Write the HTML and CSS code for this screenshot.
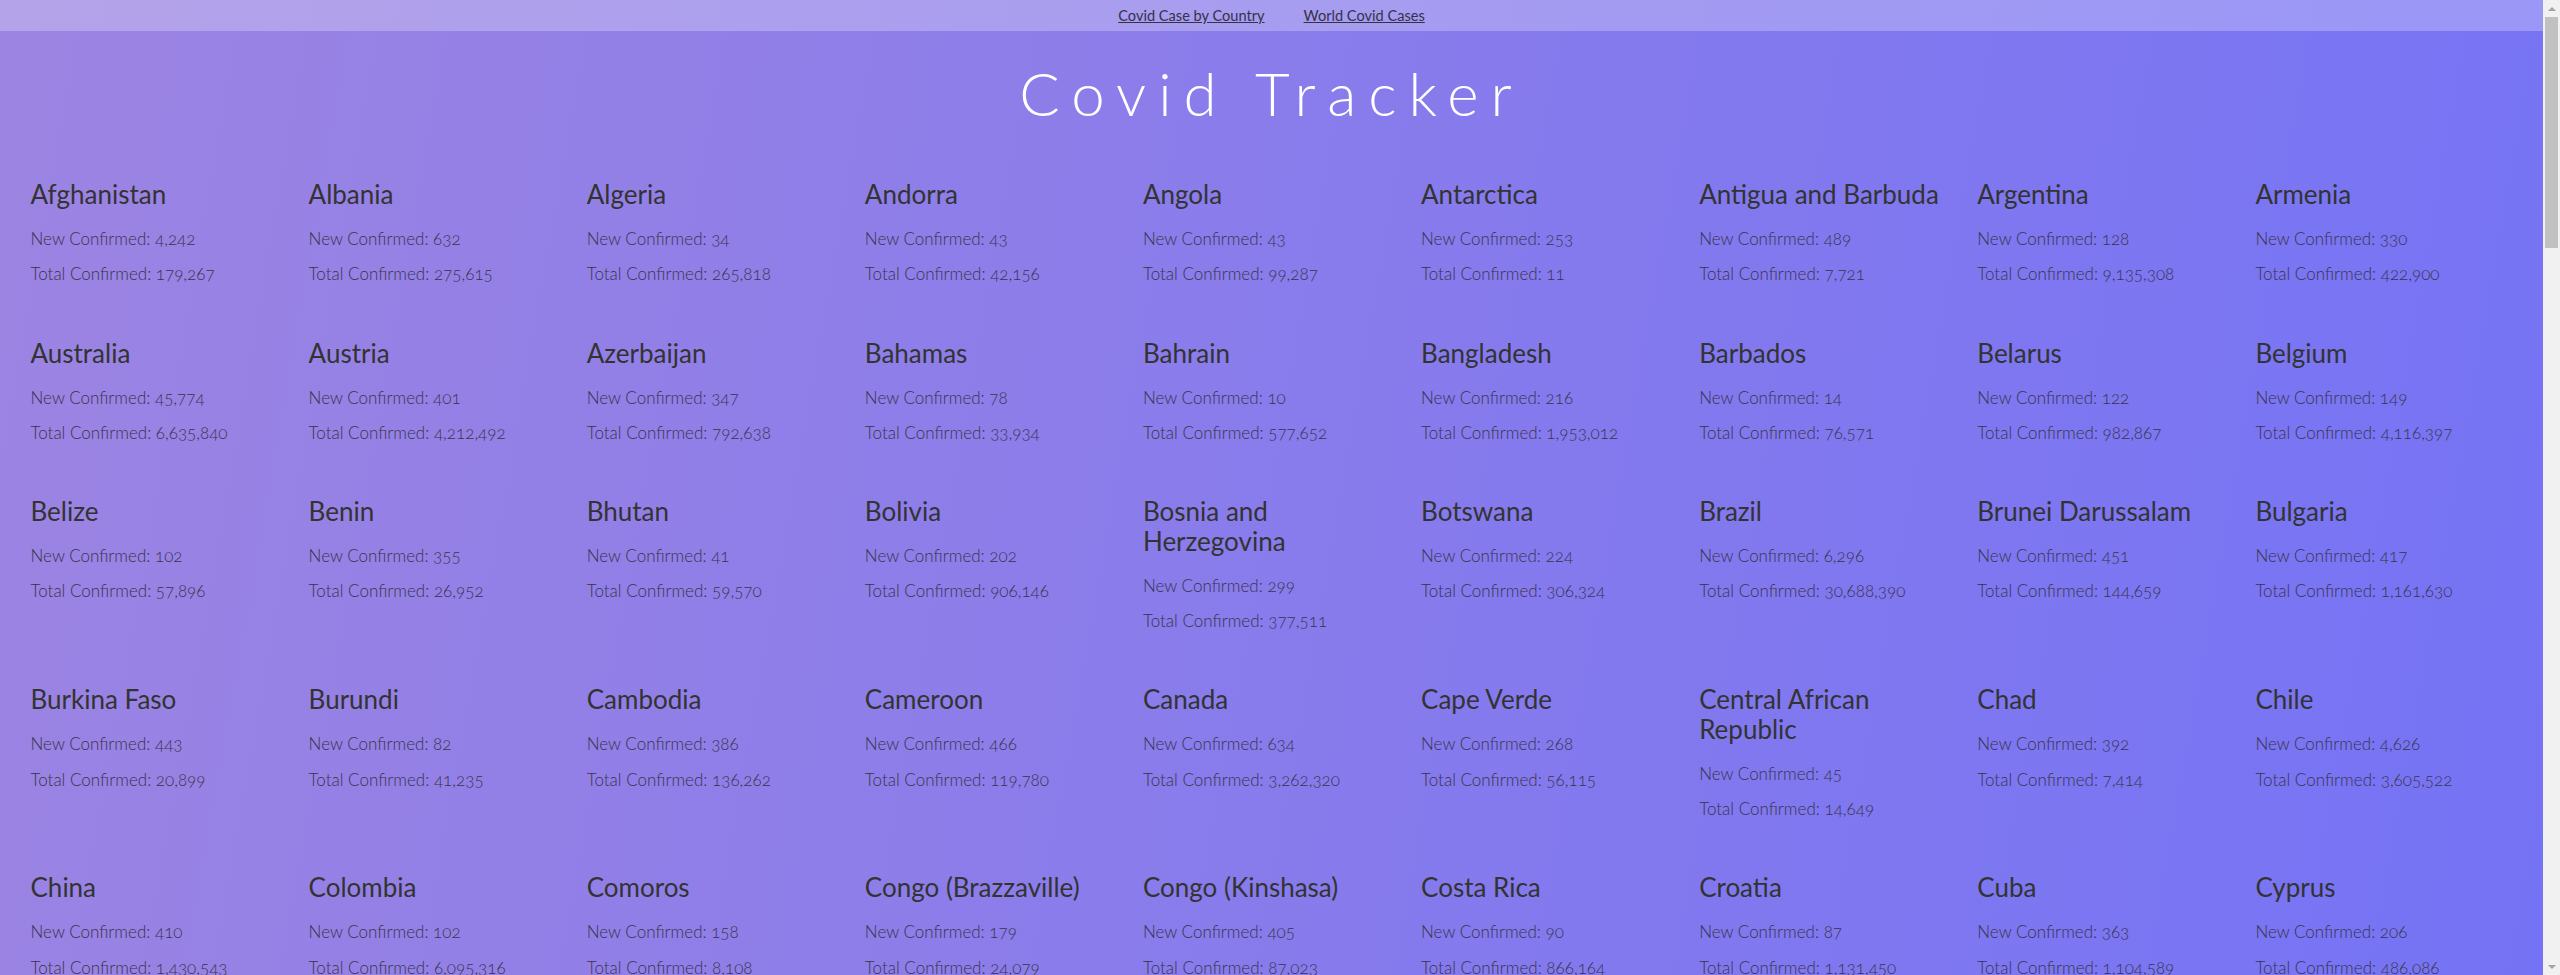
FILE: index.html
```html
<!DOCTYPE html>
<html lang="en">
<head>
<meta charset="utf-8">
<title>Covid Tracker</title>
<link rel="stylesheet" href="styles.css">
</head>
<body>
<div class="page">
<nav class="topnav">
  <a href="#">Covid Case by Country</a>
  <a href="#">World Covid Cases</a>
</nav>
<h1 class="title">Covid Tracker</h1>
<main class="grid">
  <div class="card"><h2>Afghanistan</h2><p>New Confirmed: 4,242</p><p>Total Confirmed: 179,267</p></div>
  <div class="card"><h2>Albania</h2><p>New Confirmed: 632</p><p>Total Confirmed: 275,615</p></div>
  <div class="card"><h2>Algeria</h2><p>New Confirmed: 34</p><p>Total Confirmed: 265,818</p></div>
  <div class="card"><h2>Andorra</h2><p>New Confirmed: 43</p><p>Total Confirmed: 42,156</p></div>
  <div class="card"><h2>Angola</h2><p>New Confirmed: 43</p><p>Total Confirmed: 99,287</p></div>
  <div class="card"><h2>Antarctica</h2><p>New Confirmed: 253</p><p>Total Confirmed: 11</p></div>
  <div class="card"><h2>Antigua and Barbuda</h2><p>New Confirmed: 489</p><p>Total Confirmed: 7,721</p></div>
  <div class="card"><h2>Argentina</h2><p>New Confirmed: 128</p><p>Total Confirmed: 9,135,308</p></div>
  <div class="card"><h2>Armenia</h2><p>New Confirmed: 330</p><p>Total Confirmed: 422,900</p></div>

  <div class="card"><h2>Australia</h2><p>New Confirmed: 45,774</p><p>Total Confirmed: 6,635,840</p></div>
  <div class="card"><h2>Austria</h2><p>New Confirmed: 401</p><p>Total Confirmed: 4,212,492</p></div>
  <div class="card"><h2>Azerbaijan</h2><p>New Confirmed: 347</p><p>Total Confirmed: 792,638</p></div>
  <div class="card"><h2>Bahamas</h2><p>New Confirmed: 78</p><p>Total Confirmed: 33,934</p></div>
  <div class="card"><h2>Bahrain</h2><p>New Confirmed: 10</p><p>Total Confirmed: 577,652</p></div>
  <div class="card"><h2>Bangladesh</h2><p>New Confirmed: 216</p><p>Total Confirmed: 1,953,012</p></div>
  <div class="card"><h2>Barbados</h2><p>New Confirmed: 14</p><p>Total Confirmed: 76,571</p></div>
  <div class="card"><h2>Belarus</h2><p>New Confirmed: 122</p><p>Total Confirmed: 982,867</p></div>
  <div class="card"><h2>Belgium</h2><p>New Confirmed: 149</p><p>Total Confirmed: 4,116,397</p></div>

  <div class="card"><h2>Belize</h2><p>New Confirmed: 102</p><p>Total Confirmed: 57,896</p></div>
  <div class="card"><h2>Benin</h2><p>New Confirmed: 355</p><p>Total Confirmed: 26,952</p></div>
  <div class="card"><h2>Bhutan</h2><p>New Confirmed: 41</p><p>Total Confirmed: 59,570</p></div>
  <div class="card"><h2>Bolivia</h2><p>New Confirmed: 202</p><p>Total Confirmed: 906,146</p></div>
  <div class="card"><h2>Bosnia and Herzegovina</h2><p>New Confirmed: 299</p><p>Total Confirmed: 377,511</p></div>
  <div class="card"><h2>Botswana</h2><p>New Confirmed: 224</p><p>Total Confirmed: 306,324</p></div>
  <div class="card"><h2>Brazil</h2><p>New Confirmed: 6,296</p><p>Total Confirmed: 30,688,390</p></div>
  <div class="card"><h2>Brunei Darussalam</h2><p>New Confirmed: 451</p><p>Total Confirmed: 144,659</p></div>
  <div class="card"><h2>Bulgaria</h2><p>New Confirmed: 417</p><p>Total Confirmed: 1,161,630</p></div>

  <div class="card"><h2>Burkina Faso</h2><p>New Confirmed: 443</p><p>Total Confirmed: 20,899</p></div>
  <div class="card"><h2>Burundi</h2><p>New Confirmed: 82</p><p>Total Confirmed: 41,235</p></div>
  <div class="card"><h2>Cambodia</h2><p>New Confirmed: 386</p><p>Total Confirmed: 136,262</p></div>
  <div class="card"><h2>Cameroon</h2><p>New Confirmed: 466</p><p>Total Confirmed: 119,780</p></div>
  <div class="card"><h2>Canada</h2><p>New Confirmed: 634</p><p>Total Confirmed: 3,262,320</p></div>
  <div class="card"><h2>Cape Verde</h2><p>New Confirmed: 268</p><p>Total Confirmed: 56,115</p></div>
  <div class="card"><h2>Central African Republic</h2><p>New Confirmed: 45</p><p>Total Confirmed: 14,649</p></div>
  <div class="card"><h2>Chad</h2><p>New Confirmed: 392</p><p>Total Confirmed: 7,414</p></div>
  <div class="card"><h2>Chile</h2><p>New Confirmed: 4,626</p><p>Total Confirmed: 3,605,522</p></div>

  <div class="card"><h2>China</h2><p>New Confirmed: 410</p><p>Total Confirmed: 1,430,543</p></div>
  <div class="card"><h2>Colombia</h2><p>New Confirmed: 102</p><p>Total Confirmed: 6,095,316</p></div>
  <div class="card"><h2>Comoros</h2><p>New Confirmed: 158</p><p>Total Confirmed: 8,108</p></div>
  <div class="card"><h2>Congo (Brazzaville)</h2><p>New Confirmed: 179</p><p>Total Confirmed: 24,079</p></div>
  <div class="card"><h2>Congo (Kinshasa)</h2><p>New Confirmed: 405</p><p>Total Confirmed: 87,023</p></div>
  <div class="card"><h2>Costa Rica</h2><p>New Confirmed: 90</p><p>Total Confirmed: 866,164</p></div>
  <div class="card"><h2>Croatia</h2><p>New Confirmed: 87</p><p>Total Confirmed: 1,131,450</p></div>
  <div class="card"><h2>Cuba</h2><p>New Confirmed: 363</p><p>Total Confirmed: 1,104,589</p></div>
  <div class="card"><h2>Cyprus</h2><p>New Confirmed: 206</p><p>Total Confirmed: 486,086</p></div>

  <div class="card"><h2>Czech Republic</h2><p>New Confirmed: 1,021</p><p>Total Confirmed: 3,912,305</p></div>
  <div class="card"><h2>Côte d'Ivoire</h2><p>New Confirmed: 36</p><p>Total Confirmed: 81,722</p></div>
  <div class="card"><h2>Denmark</h2><p>New Confirmed: 1,310</p><p>Total Confirmed: 3,124,706</p></div>
  <div class="card"><h2>Djibouti</h2><p>New Confirmed: 12</p><p>Total Confirmed: 15,590</p></div>
  <div class="card"><h2>Dominica</h2><p>New Confirmed: 8</p><p>Total Confirmed: 14,821</p></div>
  <div class="card"><h2>Dominican Republic</h2><p>New Confirmed: 189</p><p>Total Confirmed: 578,330</p></div>
  <div class="card"><h2>Ecuador</h2><p>New Confirmed: 512</p><p>Total Confirmed: 867,093</p></div>
  <div class="card"><h2>Egypt</h2><p>New Confirmed: 241</p><p>Total Confirmed: 505,264</p></div>
  <div class="card"><h2>El Salvador</h2><p>New Confirmed: 74</p><p>Total Confirmed: 159,742</p></div>
</main>
</div>
<div class="scrollbar" aria-hidden="true">
  <div class="sb-btn"><span class="sb-up"></span></div>
  <div class="sb-thumb"></div>
  <div class="sb-rest"></div>
  <div class="sb-btn"><span class="sb-down"></span></div>
</div>
</body>
</html>
```
FILE: styles.css
```css
html, body {
  margin: 0;
  padding: 0;
  height: 100%;
}

body {
  display: flex;
  overflow: hidden;
  font-family: Lato, "Noto Sans", sans-serif;
  color: #333;
}

.page {
  flex: 1;
  min-width: 0;
  height: 100%;
  overflow: hidden;
  background: linear-gradient(100deg, #9c84e2, #7573f5);
}

.topnav {
  height: 31px;
  background: rgba(255, 255, 255, 0.25);
  display: flex;
  justify-content: center;
  align-items: center;
  gap: 39px;
}

.topnav a {
  font-size: 14.6px;
  line-height: 18px;
  color: #353248;
  text-decoration: underline;
}

.title {
  margin: 25.5px 0 0;
  font-size: 60px;
  font-weight: 300;
  line-height: 72px;
  letter-spacing: 12px;
  text-align: center;
  color: #fff;
}

.grid {
  display: grid;
  grid-template-columns: repeat(9, 1fr);
  row-gap: 54px;
  padding: 51.5px 20px 60px;
}

.card {
  display: flex;
  flex-direction: column;
  padding: 0 20px 0 10.5px;
  min-width: 0;
}

.card h2 {
  margin: 0 0 19.5px;
  font-size: 26px;
  font-weight: 400;
  line-height: 29.5px;
  color: #333;
}

.card p {
  margin: 0;
  font-size: 17px;
  font-weight: 300;
  line-height: 20.3px;
  color: #37344c;
  font-variant-numeric: oldstyle-nums;
}

.card p + p {
  margin-top: 15px;
}

/* decorative browser scrollbar, as in the reference */
.scrollbar {
  width: 17px;
  flex: none;
  height: 100%;
  background: #f1f1f1;
  display: flex;
  flex-direction: column;
  align-items: center;
}

.sb-btn {
  width: 17px;
  height: 17px;
  display: flex;
  align-items: center;
  justify-content: center;
  flex: none;
}

.sb-up,
.sb-down {
  width: 0;
  height: 0;
  border-left: 4px solid transparent;
  border-right: 4px solid transparent;
}

.sb-up {
  border-bottom: 4px solid #a3a3a3;
}

.sb-down {
  border-top: 4px solid #a3a3a3;
}

.sb-thumb {
  width: 13px;
  height: 231px;
  background: #c1c1c1;
  flex: none;
}

.sb-rest {
  flex: 1;
}
```
